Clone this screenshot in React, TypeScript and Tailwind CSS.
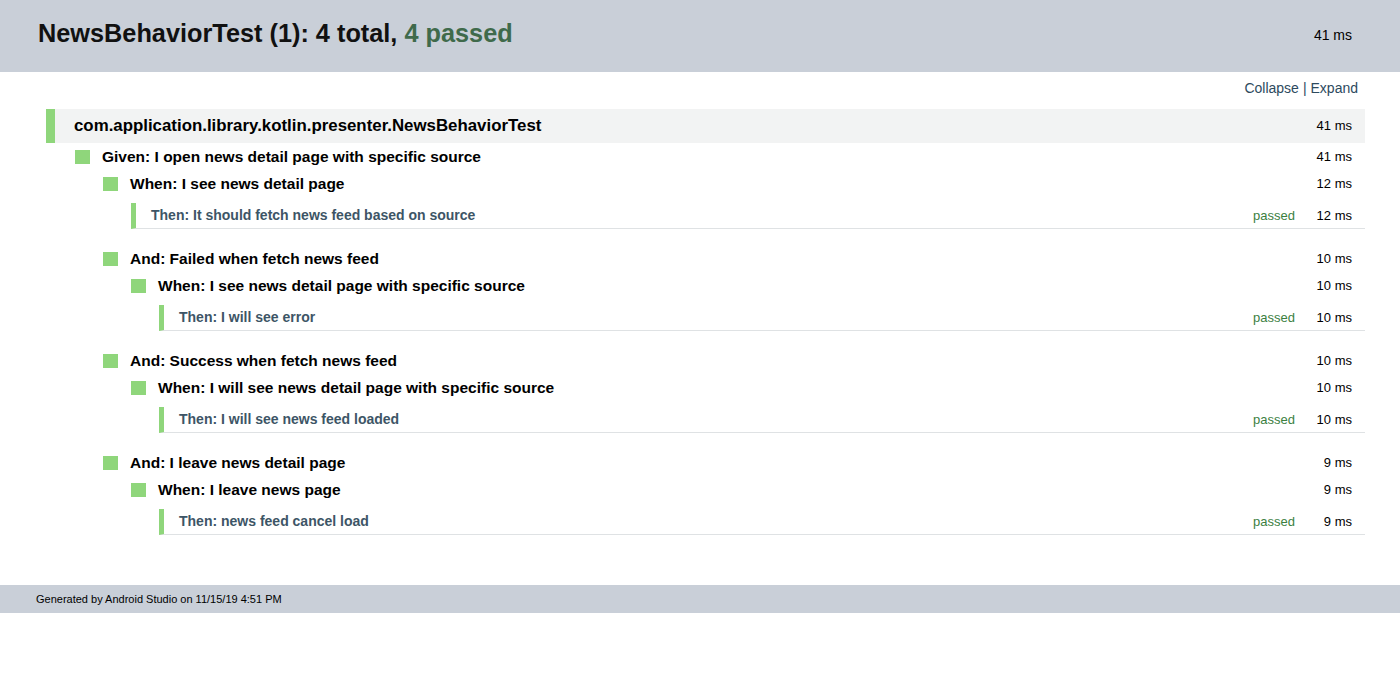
import React from 'react';

type Step = {
  name: string;
  time: string;
  passed?: boolean;
  children?: Step[];
};

const steps: Step[] = [
  {
    name: 'Given: I open news detail page with specific source',
    time: '41 ms',
    children: [
      {
        name: 'When: I see news detail page',
        time: '12 ms',
        children: [{ name: 'Then: It should fetch news feed based on source', time: '12 ms', passed: true }],
      },
      {
        name: 'And: Failed when fetch news feed',
        time: '10 ms',
        children: [
          {
            name: 'When: I see news detail page with specific source',
            time: '10 ms',
            children: [{ name: 'Then: I will see error', time: '10 ms', passed: true }],
          },
        ],
      },
      {
        name: 'And: Success when fetch news feed',
        time: '10 ms',
        children: [
          {
            name: 'When: I will see news detail page with specific source',
            time: '10 ms',
            children: [{ name: 'Then: I will see news feed loaded', time: '10 ms', passed: true }],
          },
        ],
      },
      {
        name: 'And: I leave news detail page',
        time: '9 ms',
        children: [
          {
            name: 'When: I leave news page',
            time: '9 ms',
            children: [{ name: 'Then: news feed cancel load', time: '9 ms', passed: true }],
          },
        ],
      },
    ],
  },
];

const StepNode = ({ step }: { step: Step }) => {
  if (step.passed) {
    return (
      <div className="mt-[6px] mb-[16px] h-[26px] flex items-center border-l-[5px] border-l-[#8fd67b] border-b border-b-[#dfe2e4]">
        <span className="flex-1 pl-[15px] text-[14px] font-bold text-[#3d5566]">{step.name}</span>
        <span className="mr-[20px] text-[13px] text-[#3c7f3f]">passed</span>
        <span className="w-[50px] pr-[13px] text-right text-[13px] text-black">{step.time}</span>
      </div>
    );
  }
  return (
    <div>
      <div className="h-[27px] flex items-center">
        <span className="w-[15px] h-[14px] bg-[#8fd67b] shrink-0" />
        <span className="flex-1 pl-[12px] text-[15.5px] font-bold text-black">{step.name}</span>
        <span className="pr-[13px] text-[13px] text-black">{step.time}</span>
      </div>
      <div className="pl-[28px]">
        {step.children?.map((c, i) => (
          <StepNode key={i} step={c} />
        ))}
      </div>
    </div>
  );
};

const App = () => {
  return (
    <div className="min-h-screen bg-white" style={{ fontFamily: '"Liberation Sans", Arial, sans-serif' }}>
      <header className="h-[72px] bg-[#c9cfd8] flex items-center justify-between pl-[38px] pr-[48px] pb-[5px]">
        <h1 className="text-[25.3px] font-bold text-[#111]">
          NewsBehaviorTest (1): 4 total, <span className="text-[#3f6a4b]">4 passed</span>
        </h1>
        <span className="pt-[3px] text-[14px] text-black">41 ms</span>
      </header>

      <div className="h-[37px] pt-[7px] pr-[42px] text-right text-[14px] leading-[18px] text-[#2d4a5e]">
        <a href="#" className="hover:underline">Collapse</a>
        <span className="mx-[4px]">|</span>
        <a href="#" className="hover:underline">Expand</a>
      </div>

      <div className="ml-[46px] mr-[35px]">
        <div className="h-[34px] flex items-center bg-[#f2f3f3] border-l-[9px] border-l-[#8fd67b]">
          <span className="flex-1 pl-[19px] text-[16.85px] font-bold text-black">
            com.application.library.kotlin.presenter.NewsBehaviorTest
          </span>
          <span className="pr-[13px] text-[13px] text-black">41 ms</span>
        </div>
        <div className="pl-[29px]">
          {steps.map((s, i) => (
            <StepNode key={i} step={s} />
          ))}
        </div>
      </div>

      <footer className="mt-[50px] h-[28px] bg-[#c9cfd8] flex items-center pl-[36px] text-[11px] text-black">
        Generated by Android Studio on 11/15/19 4:51 PM
      </footer>
    </div>
  );
};

export default App;
